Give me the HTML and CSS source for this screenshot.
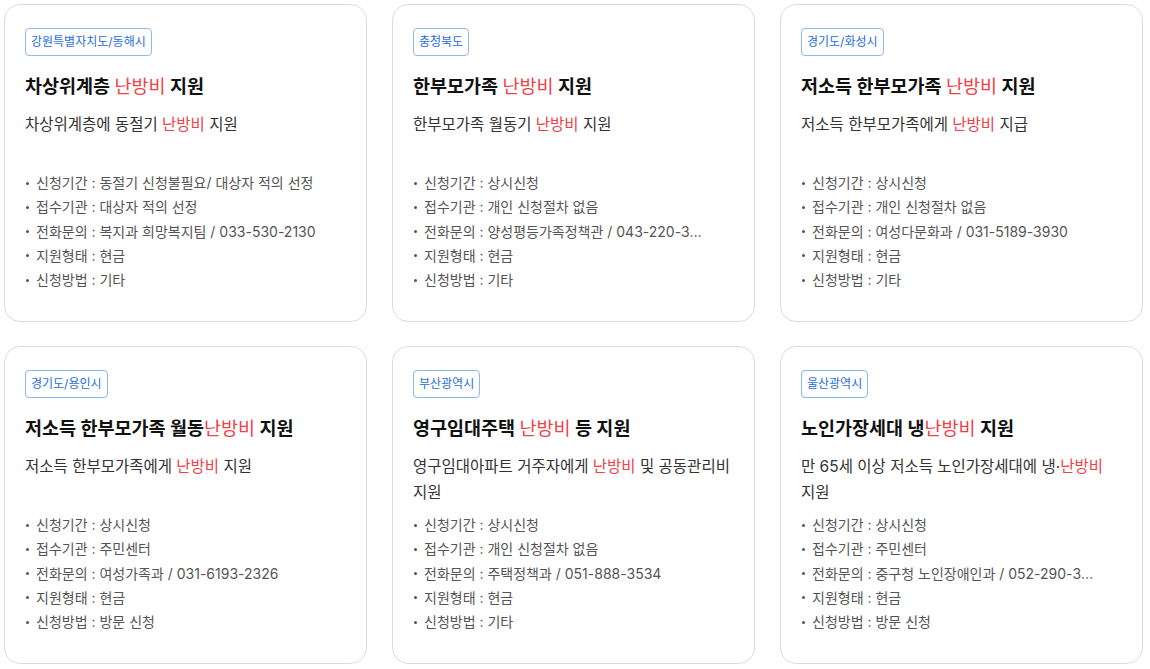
FILE: index.html
```html
<!DOCTYPE html>
<html lang="ko">
<head>
<meta charset="utf-8">
<title>난방비 지원</title>
<link rel="stylesheet" href="styles.css">
</head>
<body>
<div class="grid">
  <article class="card">
    <span class="tag">강원특별자치도/동해시</span>
    <h2 class="title">차상위계층 <em>난방비</em> 지원</h2>
    <p class="desc">차상위계층에 동절기 <em>난방비</em> 지원</p>
    <ul class="info">
      <li>신청기간 : 동절기 신청불필요/ 대상자 적의 선정</li>
      <li>접수기관 : 대상자 적의 선정</li>
      <li>전화문의 : 복지과 희망복지팀 / 033-530-2130</li>
      <li>지원형태 : 현금</li>
      <li>신청방법 : 기타</li>
    </ul>
  </article>
  <article class="card">
    <span class="tag">충청북도</span>
    <h2 class="title">한부모가족 <em>난방비</em> 지원</h2>
    <p class="desc">한부모가족 월동기 <em>난방비</em> 지원</p>
    <ul class="info">
      <li>신청기간 : 상시신청</li>
      <li>접수기관 : 개인 신청절차 없음</li>
      <li>전화문의 : 양성평등가족정책관 / 043-220-3971</li>
      <li>지원형태 : 현금</li>
      <li>신청방법 : 기타</li>
    </ul>
  </article>
  <article class="card">
    <span class="tag">경기도/화성시</span>
    <h2 class="title">저소득 한부모가족 <em>난방비</em> 지원</h2>
    <p class="desc">저소득 한부모가족에게 <em>난방비</em> 지급</p>
    <ul class="info">
      <li>신청기간 : 상시신청</li>
      <li>접수기관 : 개인 신청절차 없음</li>
      <li>전화문의 : 여성다문화과 / 031-5189-3930</li>
      <li>지원형태 : 현금</li>
      <li>신청방법 : 기타</li>
    </ul>
  </article>
  <article class="card">
    <span class="tag">경기도/용인시</span>
    <h2 class="title">저소득 한부모가족 월동<em>난방비</em> 지원</h2>
    <p class="desc">저소득 한부모가족에게 <em>난방비</em> 지원</p>
    <ul class="info">
      <li>신청기간 : 상시신청</li>
      <li>접수기관 : 주민센터</li>
      <li>전화문의 : 여성가족과 / 031-6193-2326</li>
      <li>지원형태 : 현금</li>
      <li>신청방법 : 방문 신청</li>
    </ul>
  </article>
  <article class="card">
    <span class="tag">부산광역시</span>
    <h2 class="title">영구임대주택 <em>난방비</em> 등 지원</h2>
    <p class="desc">영구임대아파트 거주자에게 <em>난방비</em> 및 공동관리비 지원</p>
    <ul class="info">
      <li>신청기간 : 상시신청</li>
      <li>접수기관 : 개인 신청절차 없음</li>
      <li>전화문의 : 주택정책과 / 051-888-3534</li>
      <li>지원형태 : 현금</li>
      <li>신청방법 : 기타</li>
    </ul>
  </article>
  <article class="card">
    <span class="tag">울산광역시</span>
    <h2 class="title">노인가장세대 냉<em>난방비</em> 지원</h2>
    <p class="desc">만 65세 이상 저소득 노인가장세대에 냉·<em>난방비</em> 지원</p>
    <ul class="info">
      <li>신청기간 : 상시신청</li>
      <li>접수기관 : 주민센터</li>
      <li>전화문의 : 중구청 노인장애인과 / 052-290-3581</li>
      <li>지원형태 : 현금</li>
      <li>신청방법 : 방문 신청</li>
    </ul>
  </article>
</div>
</body>
</html>
```

FILE: styles.css
```css
* { box-sizing: border-box; }
html, body { margin: 0; padding: 0; background: #ffffff; }
body {
  font-family: Inter, "Noto Sans CJK KR", sans-serif;
  color: #333;
}
.grid {
  display: grid;
  grid-template-columns: repeat(3, 363px);
  grid-auto-rows: 318px;
  column-gap: 25px;
  row-gap: 24px;
  padding: 4px 0 0 4px;
}
.card {
  border: 1px solid #dcdcdc;
  border-radius: 16px;
  padding: 23px 20px 20px 20px;
  display: flex;
  flex-direction: column;
  align-items: flex-start;
  min-width: 0;
}
.tag {
  display: inline-block;
  font-size: 12px;
  line-height: 26px;
  padding: 0 5px;
  border: 1px solid #8db8f2;
  border-radius: 4px;
  color: #1e6ee0;
}
.title {
  margin: 17px 0 0;
  font-size: 18.5px;
  line-height: 26px;
  font-weight: 700;
  color: #111;
}
em {
  font-style: normal;
  font-weight: 400;
  color: #f0414b;
}
.desc {
  margin: 13px 0 0;
  font-size: 15.5px;
  line-height: 26px;
  min-height: 52px;
  color: #333;
  word-break: keep-all;
  max-width: 318px;
}
.info {
  list-style: none;
  margin: 7px 0 0;
  padding: 0;
  width: 297px;
}
.info li {
  font-size: 14px;
  line-height: 24.25px;
  color: #555;
  white-space: nowrap;
  overflow: hidden;
  text-overflow: ellipsis;
}
.info li::before {
  content: "";
  display: inline-block;
  width: 3px;
  height: 3px;
  border-radius: 50%;
  background: #555;
  vertical-align: middle;
  margin: 0 7px 2px 1px;
}
```
